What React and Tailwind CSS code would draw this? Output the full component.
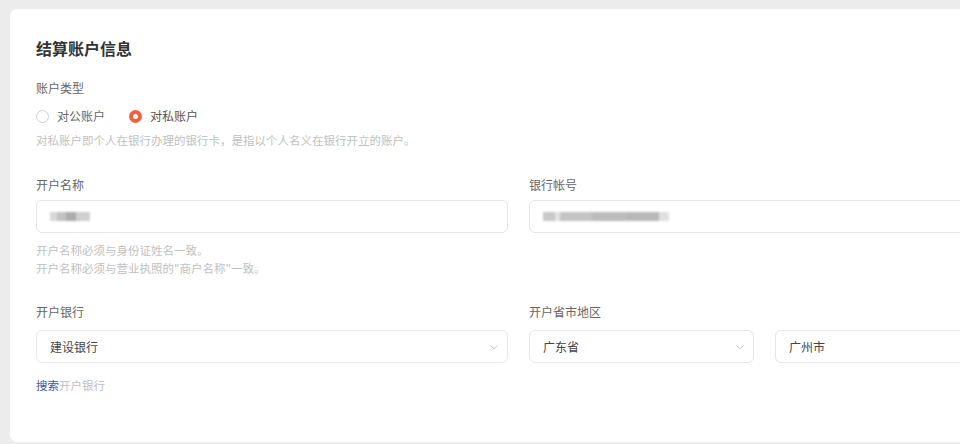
import React from 'react';

const font = { fontFamily: '"Noto Sans CJK SC", "Noto Sans", sans-serif' };

const Chevron = () => (
  <svg width="10" height="10" viewBox="0 0 10 10" className="shrink-0">
    <path d="M1.5 3.5 L5 6.8 L8.5 3.5" fill="none" stroke="#c4c4c4" strokeWidth="1" />
  </svg>
);

const Blur = ({ widths }) => (
  <div className="flex items-center blur-[1.2px]">
    {widths.map((w, i) => (
      <div key={i} className={w.cls} />
    ))}
  </div>
);

const Field = ({ label, gap = 'mb-[7px]', children }) => (
  <div className="flex flex-col">
    <div className={`text-[12px] leading-[16px] text-[#666] ${gap}`}>{label}</div>
    {children}
  </div>
);

const Box = ({ children, className = '' }) => (
  <div className={`h-[33px] rounded-[6px] border border-[#e6e6e6] bg-white flex items-center px-[13px] ${className}`}>
    {children}
  </div>
);

export default function App() {
  return (
    <div className="w-[960px] h-[444px] overflow-hidden bg-[#ececec]" style={font}>
      <div className="ml-[10px] mt-[9px] w-[1010px] h-[433px] rounded-[7px] bg-white pl-[26px] pt-[28px]">
        <h2 className="text-[16px] leading-[22px] font-bold text-[#333]">结算账户信息</h2>

        <div className="mt-[21px] text-[12px] leading-[16px] text-[#666]">账户类型</div>
        <div className="mt-[12px] flex items-center text-[12px] leading-[16px] text-[#666]">
          <span className="w-[13px] h-[13px] rounded-full border border-[#cfcfcf]" />
          <span className="ml-[8px]">对公账户</span>
          <span className="ml-[24px] w-[13px] h-[13px] rounded-full bg-[#f2603e] flex items-center justify-center">
            <span className="w-[5px] h-[5px] rounded-full bg-white" />
          </span>
          <span className="ml-[8px] text-[#555]">对私账户</span>
        </div>
        <div className="mt-[8px] text-[11.5px] leading-[16px] text-[#c0c0c0]">
          对私账户即个人在银行办理的银行卡，是指以个人名义在银行开立的账户。
        </div>

        <div className="mt-[29px] grid grid-cols-[472px_472px] gap-x-[21px]">
          <Field label="开户名称">
            <Box className="px-[7px]">
              <Blur
                widths={[
                  { cls: 'w-[7px] h-[9px] bg-[#d8d8d8]' },
                  { cls: 'w-[9px] h-[9px] bg-[#c2c2c2]' },
                  { cls: 'w-[10px] h-[9px] bg-[#acacac]' },
                  { cls: 'w-[14px] h-[9px] bg-[#cfcfcf]' },
                ]}
              />
            </Box>
            <div className="mt-[8px] text-[11.5px] leading-[18px] text-[#c0c0c0]">
              <div>开户名称必须与身份证姓名一致。</div>
              <div>开户名称必须与营业执照的"商户名称"一致。</div>
            </div>
          </Field>
          <Field label="银行帐号">
            <Box className="px-[10px]">
              <Blur
                widths={[
                  { cls: 'w-[12px] h-[9px] bg-[#c9c9c9]' },
                  { cls: 'w-[5px] h-[9px] bg-[#e4e4e4]' },
                  { cls: 'w-[32px] h-[9px] bg-[#c4c4c4]' },
                  { cls: 'w-[34px] h-[9px] bg-[#bcbcbc]' },
                  { cls: 'w-[33px] h-[9px] bg-[#b8b8b8]' },
                  { cls: 'w-[10px] h-[9px] bg-[#e0e0e0]' },
                ]}
              />
            </Box>
          </Field>
        </div>

        <div className="mt-[27px] grid grid-cols-[472px_472px] gap-x-[21px]">
          <Field label="开户银行" gap="mb-[10px]">
            <Box className="justify-between pr-[8px]">
              <span className="text-[12px] text-[#444]">建设银行</span>
              <Chevron />
            </Box>
            <div className="mt-[14px] text-[11.5px] leading-[16px] text-[#c0c0c0]">
              <span className="text-[#3d5b9b]">搜索</span>开户银行
            </div>
          </Field>
          <Field label="开户省市地区" gap="mb-[10px]">
            <div className="grid grid-cols-[225px_226px] gap-x-[21px]">
              <Box className="justify-between pr-[8px]">
                <span className="text-[12px] text-[#444]">广东省</span>
                <Chevron />
              </Box>
              <Box>
                <span className="text-[12px] text-[#444]">广州市</span>
              </Box>
            </div>
          </Field>
        </div>
      </div>
    </div>
  );
}
